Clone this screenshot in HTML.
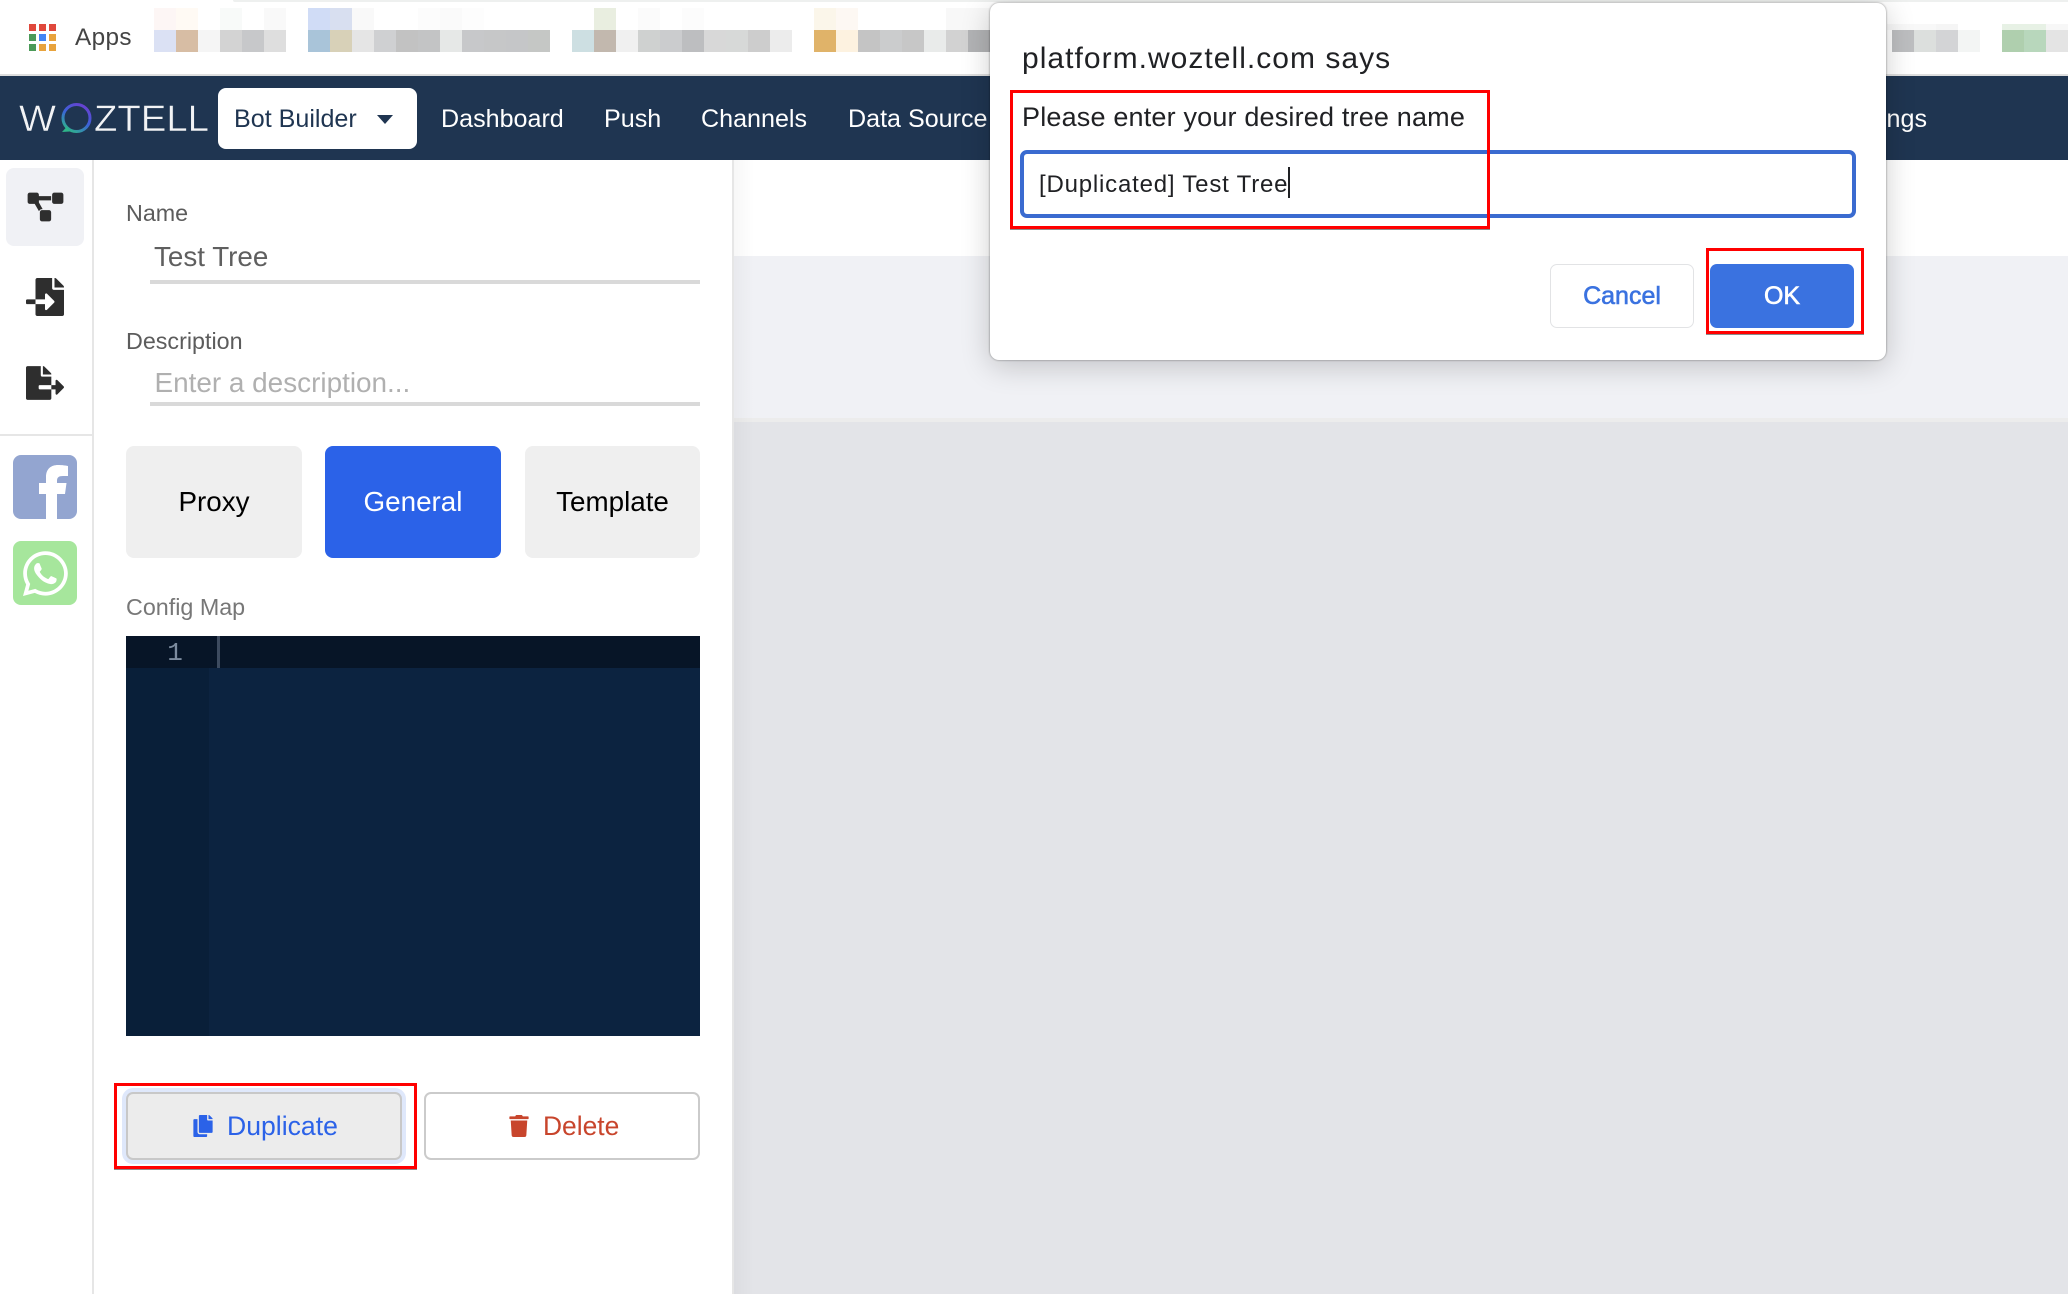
<!DOCTYPE html>
<html lang="en">
<head>
<meta charset="utf-8">
<title>Woztell Bot Builder</title>
<style>
html,body{margin:0;padding:0;background:#fff}
body{position:relative;width:2068px;height:1294px;overflow:hidden;font-family:"Liberation Sans",Arial,sans-serif}
.a{position:absolute}
.t{position:absolute;white-space:nowrap;line-height:40px;height:40px}
.c{text-align:center}
.b{position:absolute;width:22px;height:22px}
.nav{color:#fff;font-size:25.1px}
.lbl{font-size:23.3px;color:#5c5c5c}
.tile{position:absolute;top:446px;height:112px;border-radius:8px;background:#efefef;color:#000;font-size:27.8px;text-align:center;line-height:112px}
.red{position:absolute;box-sizing:border-box;border:3px solid #f00;box-shadow:0 1px 0 rgba(0,0,0,.45);z-index:20}
.btn{position:absolute;box-sizing:border-box;top:1092px;height:68px;border:2px solid #cbcbcb;border-radius:7px;background:#fff}
svg{position:absolute;display:block;overflow:visible}
</style>
</head>
<body>

<!-- browser bookmarks bar -->
<div class="a" style="left:0;top:0;width:2068px;height:74px;background:#fff"></div>
<div class="a" style="left:233px;top:0;width:1835px;height:2px;background:#eef0ef;border-bottom-left-radius:6px"></div>
<div class="a" style="left:0;top:74px;width:2068px;height:2px;background:#dedede"></div>

<div class="a" style="left:29px;top:24px;width:7px;height:6.5px;background:#e0483c"></div>
<div class="a" style="left:39px;top:24px;width:7px;height:6.5px;background:#e0483c"></div>
<div class="a" style="left:49px;top:24px;width:7px;height:6.5px;background:#e0483c"></div>
<div class="a" style="left:29px;top:34px;width:7px;height:6.5px;background:#4b9a58"></div>
<div class="a" style="left:39px;top:34px;width:7px;height:6.5px;background:#4285f4"></div>
<div class="a" style="left:49px;top:34px;width:7px;height:6.5px;background:#e8a33d"></div>
<div class="a" style="left:29px;top:44px;width:7px;height:6.5px;background:#4b9a58"></div>
<div class="a" style="left:39px;top:44px;width:7px;height:6.5px;background:#e8a33d"></div>
<div class="a" style="left:49px;top:44px;width:7px;height:6.5px;background:#e8a33d"></div>
<div class="t" style="left:75px;top:18px;font-size:24.3px;letter-spacing:.4px;color:#444">Apps</div>

<!-- blurred bookmarks: top row -->
<div class="b" style="left:154px;top:8px;background:#fdf6f5"></div>
<div class="b" style="left:176px;top:8px;background:#fffaf4"></div>
<div class="b" style="left:220px;top:8px;background:#f8faf9"></div>
<div class="b" style="left:264px;top:8px;background:#f9f9f9"></div>
<div class="b" style="left:308px;top:8px;background:#d0dcf6"></div>
<div class="b" style="left:330px;top:8px;background:#d8dff0"></div>
<div class="b" style="left:352px;top:8px;background:#f9f9f9"></div>
<div class="b" style="left:418px;top:8px;background:#fcfcfc"></div>
<div class="b" style="left:440px;top:8px;background:#fafafa"></div>
<div class="b" style="left:462px;top:8px;background:#fdfdfd"></div>
<div class="b" style="left:594px;top:8px;background:#e9eee0"></div>
<div class="b" style="left:638px;top:8px;background:#fbfbfb"></div>
<div class="b" style="left:682px;top:8px;background:#fcfcfc"></div>
<div class="b" style="left:814px;top:8px;background:#fbf6ea"></div>
<div class="b" style="left:836px;top:8px;background:#fdf8f3"></div>
<div class="b" style="left:946px;top:8px;background:#f8f8f8"></div>
<div class="b" style="left:968px;top:8px;background:#f8f8f8"></div>
<!-- bottom row -->
<div class="b" style="left:154px;top:30px;background:#dbe1f4"></div>
<div class="b" style="left:176px;top:30px;background:#d7bda4"></div>
<div class="b" style="left:198px;top:30px;background:#f5f5f5"></div>
<div class="b" style="left:220px;top:30px;background:#d3d3d3"></div>
<div class="b" style="left:242px;top:30px;background:#c7c8ca"></div>
<div class="b" style="left:264px;top:30px;background:#dedede"></div>
<div class="b" style="left:308px;top:30px;background:#a9c4d9"></div>
<div class="b" style="left:330px;top:30px;background:#d8d1b8"></div>
<div class="b" style="left:352px;top:30px;background:#e5e5e5"></div>
<div class="b" style="left:374px;top:30px;background:#cfd0d2"></div>
<div class="b" style="left:396px;top:30px;background:#c2c2c2"></div>
<div class="b" style="left:418px;top:30px;background:#c3c4c5"></div>
<div class="b" style="left:440px;top:30px;background:#e6e8e7"></div>
<div class="b" style="left:462px;top:30px;background:#c7c8ca"></div>
<div class="b" style="left:484px;top:30px;background:#c6c7c8"></div>
<div class="b" style="left:506px;top:30px;background:#c5c6c8"></div>
<div class="b" style="left:528px;top:30px;background:#c5c7c5"></div>
<div class="b" style="left:572px;top:30px;background:#cddfe2"></div>
<div class="b" style="left:594px;top:30px;background:#c2b8ae"></div>
<div class="b" style="left:616px;top:30px;background:#f0f0f0"></div>
<div class="b" style="left:638px;top:30px;background:#cfd1d0"></div>
<div class="b" style="left:660px;top:30px;background:#cbccce"></div>
<div class="b" style="left:682px;top:30px;background:#bdbec0"></div>
<div class="b" style="left:704px;top:30px;background:#d8d8d8"></div>
<div class="b" style="left:726px;top:30px;background:#d7d9d8"></div>
<div class="b" style="left:748px;top:30px;background:#cdcdcd"></div>
<div class="b" style="left:770px;top:30px;background:#ececec"></div>
<div class="b" style="left:814px;top:30px;background:#e0b369"></div>
<div class="b" style="left:836px;top:30px;background:#fdf2e0"></div>
<div class="b" style="left:858px;top:30px;background:#c4c4c4"></div>
<div class="b" style="left:880px;top:30px;background:#cbcccd"></div>
<div class="b" style="left:902px;top:30px;background:#c7c7c7"></div>
<div class="b" style="left:924px;top:30px;background:#e9ebea"></div>
<div class="b" style="left:946px;top:30px;background:#d2d2d2"></div>
<div class="b" style="left:968px;top:30px;background:#b2b3b5"></div>
<!-- right of dialog -->
<div class="a" style="left:1887px;top:24px;width:49px;height:6px;background:#f8f8f8"></div>
<div class="a" style="left:1936px;top:24px;width:22px;height:6px;background:#f5f5f5"></div>
<div class="b" style="left:1892px;top:30px;background:#bdbec0"></div>
<div class="b" style="left:1914px;top:30px;background:#dcdfdd"></div>
<div class="b" style="left:1936px;top:30px;background:#d3d4d6"></div>
<div class="b" style="left:1958px;top:30px;background:#f3f5f4"></div>
<div class="a" style="left:2002px;top:24px;width:44px;height:6px;background:#e7f1e5"></div>
<div class="a" style="left:2046px;top:24px;width:22px;height:6px;background:#f7f7f7"></div>
<div class="b" style="left:2002px;top:30px;background:#afcfae"></div>
<div class="b" style="left:2024px;top:30px;background:#b8d7bc"></div>
<div class="b" style="left:2046px;top:30px;background:#e4e4e4"></div>

<!-- navbar -->
<div class="a" style="left:0;top:76px;width:2068px;height:84px;background:#1f3551"></div>
<svg style="left:0;top:0" width="230" height="160" viewBox="0 0 230 160">
  <defs>
    <linearGradient id="lg" x1="0.8" y1="0" x2="0.2" y2="1">
      <stop offset="0" stop-color="#6a3fd0"/>
      <stop offset=".5" stop-color="#3b62d8"/>
      <stop offset="1" stop-color="#2fb58a"/>
    </linearGradient>
  </defs>
  <text x="19" y="131" font-family="Liberation Sans" font-size="37.5" fill="#f2f3f5" stroke="#1f3551" stroke-width=".5" textLength="37" lengthAdjust="spacingAndGlyphs">W</text>
  <circle cx="76.5" cy="118" r="13.5" fill="none" stroke="url(#lg)" stroke-width="3"/>
  <path d="M62 132l8-.5-3-5z" fill="#2fb58a"/>
  <text x="94" y="131" font-family="Liberation Sans" font-size="37.5" fill="#f2f3f5" stroke="#1f3551" stroke-width=".5" textLength="115" lengthAdjust="spacingAndGlyphs">ZTELL</text>
</svg>
<div class="a" style="left:218px;top:88px;width:199px;height:61px;border-radius:8px;background:#fff"></div>
<div class="t" style="left:234px;top:98.5px;font-size:25.1px;color:#1f3551">Bot Builder</div>
<div class="a" style="left:377px;top:115px;width:0;height:0;border-left:8px solid transparent;border-right:8px solid transparent;border-top:9px solid #1f3551"></div>
<div class="t nav" style="left:441px;top:98.5px">Dashboard</div>
<div class="t nav" style="left:604px;top:98.5px">Push</div>
<div class="t nav" style="left:701px;top:98.5px">Channels</div>
<div class="t nav" style="left:848px;top:98.5px">Data Source</div>
<div class="t nav" style="right:141px;top:98.5px">Settings</div>

<!-- left icon rail -->
<div class="a" style="left:92px;top:160px;width:2px;height:1134px;background:#e6e6e6"></div>
<div class="a" style="left:0;top:434px;width:92px;height:2px;background:#e6e6e6"></div>
<div class="a" style="left:6px;top:168px;width:78px;height:78px;border-radius:8px;background:#f0f1f5"></div>
<svg style="left:28px;top:193px" width="35" height="28" viewBox="0 0 640 512"><path fill="#2e2e2e" stroke="#2e2e2e" stroke-width="14" d="M384 320H256c-17.67 0-32 14.33-32 32v128c0 17.67 14.33 32 32 32h128c17.67 0 32-14.33 32-32V352c0-17.67-14.33-32-32-32zM192 32c0-17.67-14.33-32-32-32H32C14.33 0 0 14.33 0 32v128c0 17.67 14.33 32 32 32h95.72l73.16 128.04C211.98 300.98 232.4 288 256 288h.28L192 175.51V128h224V64H192V32zM608 0H480c-17.67 0-32 14.33-32 32v128c0 17.67 14.33 32 32 32h128c17.67 0 32-14.33 32-32V32c0-17.67-14.33-32-32-32z"/></svg>
<svg style="left:26px;top:278px" width="38" height="38" viewBox="0 0 512 512"><path fill="#2e2e2e" d="M16 288c-8.8 0-16 7.2-16 16v32c0 8.8 7.2 16 16 16h112v-64zm489-183L407.1 7c-4.5-4.5-10.6-7-17-7H384v128h128v-6.1c0-6.4-2.5-12.5-7-16.9zm-153 31V0H152c-13.3 0-24 10.7-24 24v264h128v-65.2c0-14.3 17.3-21.4 27.4-11.3L379 308c6.6 6.7 6.6 17.4 0 24l-95.7 96.4c-10.1 10.1-27.4 3-27.4-11.3V352H128v136c0 13.3 10.7 24 24 24h336c13.3 0 24-10.7 24-24V160H376c-13.2 0-24-10.8-24-24z"/></svg>
<svg style="left:26px;top:366px" width="38" height="34" viewBox="0 0 576 512"><path fill="#2e2e2e" d="M384 121.9c0-6.3-2.5-12.4-7-16.9L279.1 7c-4.5-4.5-10.6-7-17-7H256v128h128zM571 308l-95.7-96.4c-10.1-10.1-27.4-3-27.4 11.3V288h-64v64h64v65.2c0 14.3 17.3 21.4 27.4 11.3L571 332c6.6-6.6 6.6-17.4 0-24zm-379 28v-32c0-8.8 7.2-16 16-16h176V160H248c-13.2 0-24-10.8-24-24V0H24C10.7 0 0 10.7 0 24v464c0 13.3 10.7 24 24 24h336c13.3 0 24-10.7 24-24V352H208c-8.8 0-16-7.2-16-16z"/></svg>
<svg style="left:0;top:0" width="94" height="620" viewBox="0 0 94 620">
  <rect x="13" y="455" width="64" height="64" rx="8" fill="#93a5d0"/>
  <path fill="#fff" d="M46 519V494H39V483H46V477C46 469 51 465 58 465 62 465 66 465.5 68 466V476H63C58.5 476 57 477.5 57 481V483H66.5L65 494H57V519Z"/>
  <rect x="13" y="541" width="64" height="64" rx="8" fill="#a6e69c"/>
  <path transform="translate(23 548) scale(.1)" fill="#fff" d="M380.9 97.1C339 55.1 283.2 32 223.9 32c-122.4 0-222 99.6-222 222 0 39.1 10.2 77.3 29.6 111L0 480l117.7-30.9c32.4 17.7 68.9 27 106.1 27h.1c122.3 0 224.1-99.6 224.1-222 0-59.3-25.2-115-67.1-157zm-157 341.6c-33.2 0-65.7-8.9-94-25.7l-6.7-4-69.8 18.3L72 359.2l-4.4-7c-18.5-29.4-28.2-63.3-28.2-98.2 0-101.7 82.8-184.5 184.6-184.5 49.3 0 95.6 19.2 130.4 54.1 34.8 34.9 56.2 81.2 56.1 130.5 0 101.8-84.9 184.6-186.6 184.6zm101.2-138.2c-5.5-2.8-32.8-16.2-37.9-18-5.1-1.9-8.8-2.8-12.5 2.8-3.7 5.6-14.3 18-17.6 21.8-3.2 3.7-6.5 4.2-12 1.4-32.6-16.3-54-29.1-75.5-66-5.7-9.8 5.7-9.1 16.3-30.3 1.8-3.7.9-6.9-.5-9.7-1.4-2.8-12.5-30.1-17.1-41.2-4.5-10.8-9.1-9.3-12.5-9.5-3.2-.2-6.9-.2-10.6-.2-3.7 0-9.7 1.4-14.8 6.9-5.1 5.6-19.4 19-19.4 46.3 0 27.3 19.9 53.7 22.6 57.4 2.8 3.7 39.1 59.7 94.8 83.8 35.2 15.2 49 16.5 66.6 13.9 10.7-1.6 32.8-13.4 37.4-26.4 4.6-13 4.6-24.1 3.2-26.4-1.3-2.5-5-3.9-10.5-6.6z"/>
</svg>

<!-- form panel -->
<div class="t lbl" style="left:126px;top:193px">Name</div>
<div class="t" style="left:154px;top:237px;font-size:27.8px;color:#5f5f5f">Test Tree</div>
<div class="a" style="left:150px;top:280px;width:550px;height:4px;background:#d9d9d9"></div>
<div class="t lbl" style="left:126px;top:321px">Description</div>
<div class="t" style="left:154.5px;top:363px;font-size:27.9px;color:#b0b0b0">Enter a description...</div>
<div class="a" style="left:150px;top:402px;width:550px;height:4px;background:#d9d9d9"></div>

<div class="tile" style="left:126px;width:176px">Proxy</div>
<div class="tile" style="left:325px;width:176px;background:#2b62e8;color:#fff">General</div>
<div class="tile" style="left:525px;width:175px">Template</div>

<div class="t lbl" style="left:126px;top:587px;color:#777">Config Map</div>

<div class="a" style="left:126px;top:636px;width:574px;height:400px;background:#0c2340"></div>
<div class="a" style="left:126px;top:636px;width:83px;height:400px;background:#091f39"></div>
<div class="a" style="left:126px;top:636px;width:574px;height:32px;background:#071527"></div>
<div class="a" style="left:217px;top:636px;width:3px;height:32px;background:#3d4b5f"></div>
<div class="t c" style="left:160px;top:633px;width:30px;font-family:'Liberation Mono',monospace;font-size:26px;color:#7c8b9e">1</div>

<div class="btn" style="left:126px;width:276px;background:#ececec;border-color:#c8c8c8;box-shadow:0 0 0 4px #dfe8fb"></div>
<svg style="left:193px;top:1115px" width="20" height="22" viewBox="0 0 448 512"><path fill="#2b62e8" d="M320 448v40c0 13.255-10.745 24-24 24H24c-13.255 0-24-10.745-24-24V120c0-13.255 10.745-24 24-24h72v296c0 30.879 25.121 56 56 56h168zm0-344V0H152c-13.255 0-24 10.745-24 24v368c0 13.255 10.745 24 24 24h272c13.255 0 24-10.745 24-24V128H344c-13.2 0-24-10.8-24-24zm120.971-31.029L375.029 7.029A24 24 0 0 0 358.059 0H352v96h96v-6.059a24 24 0 0 0-7.029-16.97z"/></svg>
<div class="t" style="left:227px;top:1105.5px;font-size:26.6px;color:#2b62e8">Duplicate</div>

<div class="btn" style="left:424px;width:276px"></div>
<svg style="left:509px;top:1115px" width="20" height="22" viewBox="0 0 448 512"><path fill="#c8452c" d="M432 32H312l-9.4-18.7A24 24 0 0 0 281.1 0H166.8a23.72 23.72 0 0 0-21.4 13.3L136 32H16A16 16 0 0 0 0 48v32a16 16 0 0 0 16 16h416a16 16 0 0 0 16-16V48a16 16 0 0 0-16-16zM53.2 467a48 48 0 0 0 47.9 45h245.8a48 48 0 0 0 47.9-45L416 128H32z"/></svg>
<div class="t" style="left:543px;top:1105.5px;font-size:26.4px;color:#c8452c">Delete</div>

<div class="red" style="left:114px;top:1083px;width:303px;height:86px"></div>

<!-- main area -->
<div class="a" style="left:732px;top:160px;width:2px;height:1134px;background:#e6e6e6"></div>
<div class="a" style="left:734px;top:160px;width:1334px;height:96px;background:#fff"></div>
<div class="a" style="left:734px;top:256px;width:1334px;height:162px;background:#f0f1f5"></div>
<div class="a" style="left:734px;top:418px;width:1334px;height:4px;background:#ececec"></div>
<div class="a" style="left:734px;top:422px;width:1334px;height:872px;background:#e3e4e8"></div>
<div class="a" style="left:734px;top:160px;width:20px;height:1134px;background:linear-gradient(to right,rgba(0,0,0,.03),rgba(0,0,0,0))"></div>

<!-- dialog -->
<div class="a" style="left:990px;top:3px;width:896px;height:357px;border-radius:9px;background:#fff;box-shadow:0 0 2px rgba(0,0,0,.45),0 6px 30px rgba(0,0,0,.2);z-index:10"></div>
<div class="t" style="left:1022px;top:39px;font-size:30px;letter-spacing:1.03px;color:#202124;z-index:11">platform.woztell.com says</div>
<div class="t" style="left:1022px;top:97px;font-size:27px;letter-spacing:.18px;color:#202124;z-index:11">Please enter your desired tree name</div>
<div class="a" style="left:1020px;top:150px;width:836px;height:68px;box-sizing:border-box;border:4px solid #3a6bd0;border-radius:7px;background:#fff;z-index:11"></div>
<div class="t" style="left:1039px;top:165px;font-size:24px;letter-spacing:.8px;color:#202124;z-index:12">[Duplicated] Test Tree</div>
<div class="a" style="left:1288px;top:167px;width:2px;height:31px;background:#202124;z-index:12"></div>
<div class="a" style="left:1550px;top:264px;width:144px;height:64px;box-sizing:border-box;border:1.5px solid #e2e3e5;border-radius:7px;background:#fff;z-index:11"></div>
<div class="t c" style="left:1550px;top:276px;width:144px;font-size:25px;color:#3a72e0;-webkit-text-stroke:.6px #3a72e0;z-index:12">Cancel</div>
<div class="a" style="left:1710px;top:264px;width:144px;height:64px;border-radius:7px;background:#3a72e0;z-index:11"></div>
<div class="t c" style="left:1710px;top:276px;width:144px;font-size:25px;color:#fff;-webkit-text-stroke:.6px #fff;z-index:12">OK</div>
<div class="red" style="left:1010px;top:90px;width:480px;height:139px"></div>
<div class="red" style="left:1706px;top:248px;width:158px;height:86px"></div>

</body>
</html>
